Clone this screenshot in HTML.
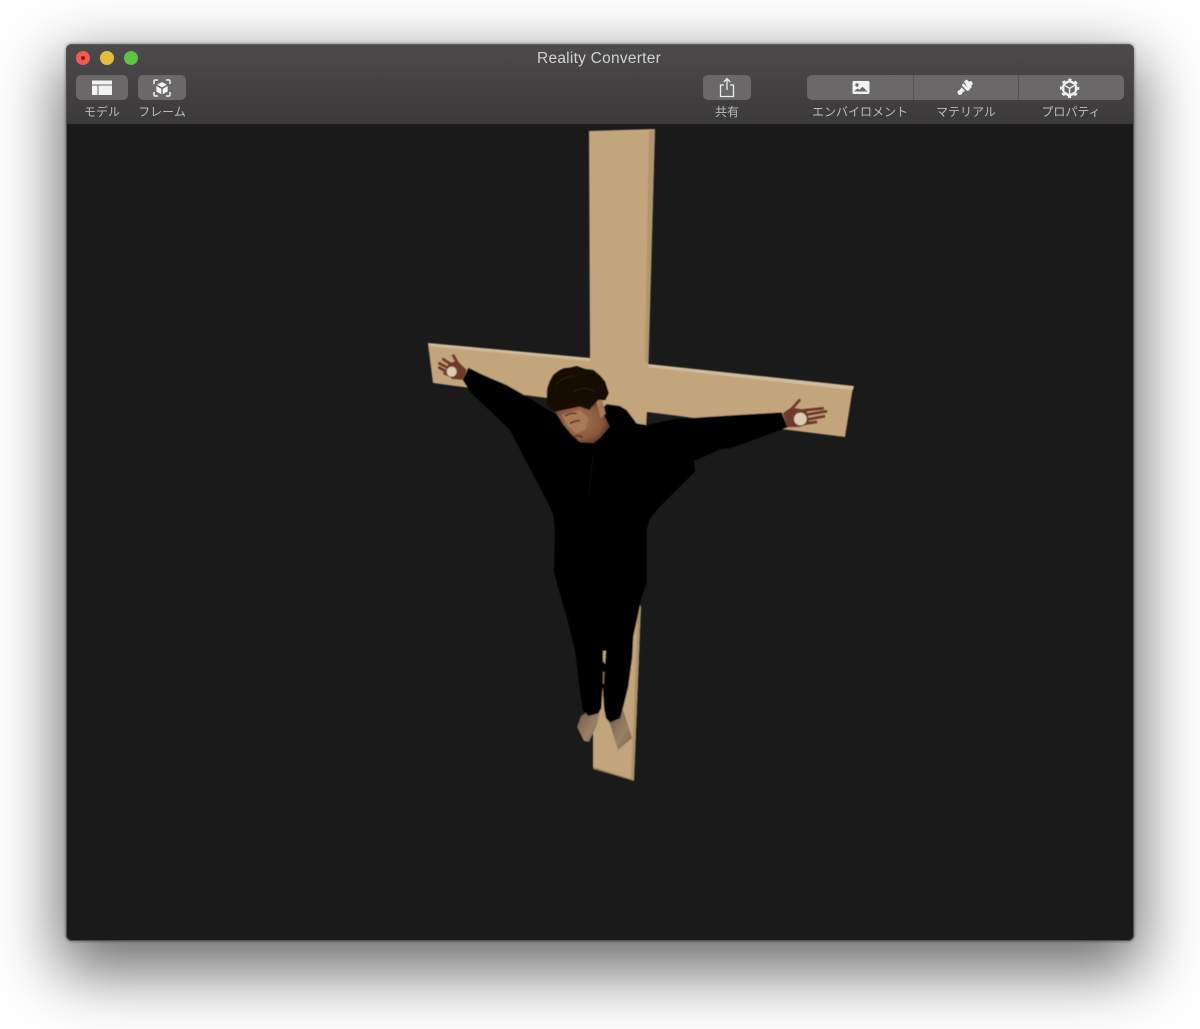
<!DOCTYPE html>
<html lang="ja">
<head>
<meta charset="utf-8">
<title>Reality Converter</title>
<style>
html,body{margin:0;padding:0;width:1200px;height:1029px;background:#fff;overflow:hidden}
#win{position:absolute;left:66px;top:44px;width:1068px;height:897px;border-radius:6px;background:#1a1a1a;box-shadow:0 24px 62px 8px rgba(0,0,0,.56),0 0 3px rgba(0,0,0,.5)}
#bar{position:absolute;left:66px;top:44px;width:1068px;height:80px;border-radius:6px 6px 0 0;background:linear-gradient(#4c4a4b,#3b393a)}
#edge{position:absolute;left:66px;top:44px;width:1068px;height:897px;border-radius:6px;box-sizing:border-box;border:1px solid #515151;border-top-color:#5a5a5a;pointer-events:none}
.t{position:absolute;font-family:"Liberation Sans","Noto Sans CJK JP",sans-serif;white-space:nowrap;transform:translateX(-50%)}
#title{left:599px;top:50px;font-size:15.5px;line-height:18px;color:#d2d2d2;letter-spacing:.25px}
.l{top:104px;font-size:12px;line-height:17px;color:#bcbcbc}
.b{position:absolute;top:75px;height:25px;background:#6a6869;border-radius:5px}
.d{position:absolute;top:75px;width:1px;height:25px;background:#565455}
.dot{position:absolute;top:51px;width:14px;height:14px;border-radius:50%}
svg{position:absolute;left:0;top:0}
</style>
</head>
<body>
<div id="win"></div>
<svg width="1200" height="1029" viewBox="0 0 1200 1029">
<defs>
<filter id="s" x="-5%" y="-5%" width="110%" height="110%"><feGaussianBlur stdDeviation=".5"/></filter>
<filter id="f" x="-20%" y="-20%" width="140%" height="140%"><feGaussianBlur stdDeviation="1.500"/></filter>
<linearGradient id="ft" x1="0" y1="0" x2="1" y2="1"><stop offset="0" stop-color="#6f5a44"/><stop offset=".6" stop-color="#998068"/><stop offset="1" stop-color="#7a644c"/></linearGradient>
<radialGradient id="sk" cx=".45" cy=".5" r=".6"><stop offset="0" stop-color="#a87553"/><stop offset=".7" stop-color="#85563b"/><stop offset="1" stop-color="#4a2c1c"/></radialGradient>
</defs>
<g filter="url(#s)">
<!-- cross -->
<polygon points="589,131 655,129 648,365 853,387 845,437 647,412 646,430 590,430 547,398 433,383 428,344 590,359" fill="#c3a57b"/>
<polygon points="649,131 655,129 648.500,365 645,362" fill="#b0966f"/>
<polygon points="428,343 590,358 590,361 429,346" fill="#cfbd9c"/>
<polygon points="648,364 854,386 853,390 648,367" fill="#cfbd9c"/>
<polygon points="593,700 630,600 641,606 634,781 593,768" fill="#c3a57b"/>
<polygon points="638,606 641,606 634,781 631,779" fill="#ab9069"/>
<polygon points="593,767 631,779 634,781 593,769" fill="#8f7a5c"/>
<!-- body -->
<g transform="translate(420 330) scale(.33333)">
<polygon fill="#030202" points="145,113 190,135 260,165 330,205 385,240 480,300 560,222 600,228 620,240 650,280 680,285 760,268 830,263 950,255 1085,247 1103,292 1000,330 930,355 900,358 840,385 822,392 825,425 770,480 720,530 690,565 680,600 680,610 405,610 400,550 275,310 270,300 150,185 128,150"/>
<path d="M520,370 L510,460 L497,600" stroke="#120b07" stroke-width="3" fill="none"/>
<path d="M575,490 l45,-8 l0,25 l-30,12z" stroke="#0e0805" stroke-width="2" fill="none"/>
<!-- left hand -->
<g fill="none" stroke="#70392a" stroke-width="9" stroke-linecap="round">
<path d="M100,77 L116,105M70,88 L98,106M58,100 L88,116M58,113 L85,128M74,130 L95,138"/>
</g>
<polygon fill="#70392a" points="85,100 112,92 140,120 128,150 95,147 78,122"/>
<circle cx="95" cy="125" r="15" fill="#dacdb4"/>
<!-- right hand -->
<g fill="none" stroke="#70392a" stroke-width="9" stroke-linecap="round">
<path d="M1138,211 L1112,240M1150,241 L1208,235M1155,255 L1218,244M1155,270 L1212,259M1150,282 L1188,276"/>
</g>
<polygon fill="#70392a" points="1088,250 1113,232 1160,240 1168,280 1140,291 1103,292"/>
<circle cx="1141" cy="267" r="19" fill="#dacdb4"/>
</g>
<!-- feet (behind legs) -->
<polygon points="577,727 581,716 590,710 600,710 597,725 589,742 584,741" fill="url(#ft)"/>
<polygon points="608,718 623,710 628,725 632,738 618,750" fill="url(#ft)"/>
<g transform="translate(530 500) scale(.33333)">
<polygon fill="#030202" points="50,-5 75,60 72,215 85,265 110,350 135,450 148,560 158,630 175,648 205,640 214,625 218,560 222,625 228,655 240,668 270,655 280,620 295,560 307,470 310,410 325,340 335,290 350,250 350,65 405,-5"/>
</g>
<polygon points="603,651 606,651 605,664 603,661" fill="#c3a57b"/>
<polygon points="603,672 604.500,672 604,684 603,684" fill="#8a6f4e"/>
</g>
<!-- head -->
<g transform="translate(530 355) scale(.33333)" filter="url(#f)">
<polygon fill="url(#sk)" points="75,170 100,165 150,155 200,135 220,150 225,185 240,215 210,250 190,265 150,262 125,240 100,210"/>
<polygon fill="#a97a58" points="95,180 150,165 175,190 165,225 140,235 115,215"/>
<path d="M105,183 q18,-10 35,-8" stroke="#4a2e1e" stroke-width="4" fill="none"/>
<path d="M120,205 q14,-8 30,-8" stroke="#4a2e1e" stroke-width="5" fill="none"/>
<path d="M135,245 q12,-6 22,2" stroke="#5a3424" stroke-width="5" fill="none"/>
<polygon fill="#a67757" points="198,140 215,130 228,175 212,190"/>
<polygon fill="#130a05" points="52,100 60,78 70,60 85,48 100,40 120,38 140,33 165,42 190,45 210,62 225,80 236,115 226,135 205,135 195,145 178,165 150,155 100,165 75,170 50,150"/>
<path d="M75,90 q30,-30 60,-25M130,110 q35,-20 65,0" stroke="#23140a" stroke-width="6" fill="none"/>
</g>
</svg>
<div id="bar"></div>
<div id="edge"></div>
<div class="dot" style="left:76px;background:#f25a52"></div>
<div class="dot" style="left:100px;background:#e5bd3e"></div>
<div class="dot" style="left:123.500px;background:#62c246"></div>
<div style="position:absolute;left:81px;top:56px;width:4px;height:4px;border-radius:50%;background:#8c1a12"></div>
<div class="t" id="title">Reality Converter</div>
<div class="b" style="left:76px;width:52px"></div>
<div class="b" style="left:138px;width:48px"></div>
<div class="b" style="left:703px;width:48px"></div>
<div class="b" style="left:807px;width:317px"></div>
<div class="d" style="left:913px"></div>
<div class="d" style="left:1018px"></div>
<svg width="1200" height="1029" viewBox="0 0 1200 1029">
<!-- model -->
<rect x="92" y="80.500" width="20" height="4" fill="#f2f2f2"/>
<rect x="92" y="85.500" width="5.500" height="9.500" fill="#f2f2f2"/>
<rect x="98.500" y="85.500" width="13.500" height="9.500" fill="#f2f2f2"/>
<!-- frame -->
<g fill="none" stroke="#f2f2f2" stroke-width="1.500">
<path d="M154,84v-3q0-1 1-1h3M166,80h3q1,0 1,1v3M170,92v3q0,1-1,1h-3M158,96h-3q-1,0-1-1v-3"/>
</g>
<path fill="#f2f2f2" d="M162,82l5,2.700-5,2.700-5-2.700z M156.300,86l5,2.800v5.500l-5-2.800z M167.700,86v5.500l-5,2.800v-5.500z"/>
<!-- share -->
<g fill="none" stroke="#eeeeee" stroke-width="1.300">
<path d="M724,85h-3.500v11.500h13v-11.500h-3.500"/>
<path d="M727,90v-11M723.800,82l3.200-3.300 3.200,3.300"/>
</g>
<!-- environment -->
<rect x="852.500" y="81" width="17" height="13" rx="1.500" fill="#f2f2f2"/>
<circle cx="857" cy="85" r="1.700" fill="#6a6869"/>
<path fill="#6a6869" d="M854,91.500l3.500-3 2,1.200 3,-3 5,4.800z"/>
<!-- brush -->
<path fill="#f2f2f2" d="M964,81.500l2.800-2 2,2.200 2.500-.8 1.700,3.200-1.500,1 .1,2.200-2.800,2.700z"/>
<path fill="#f2f2f2" d="M963,83l7,7-2.800,1-5.300-5.300z"/>
<path fill="#f2f2f2" d="M961.500,87.500l3.500,3.300-2.500,1.700q-.3,2.300-2.700,2.500-2.300-.2-2.300-2.700 .2-2 2.200-2.200z"/>
<!-- properties -->
<circle cx="1069.600" cy="88.300" r="7.800" fill="#f2f2f2"/>
<circle cx="1069.600" cy="88.300" r="8.700" fill="none" stroke="#f2f2f2" stroke-width="2" stroke-dasharray="3.300 3.530" stroke-dashoffset="1.600"/>
<path fill="#6a6869" d="M1069.600,82.300l5.200,3v6l-5.200,3-5.200-3v-6z"/>
<path fill="none" stroke="#f2f2f2" stroke-width="1.400" d="M1064.400,85.300l5.200,3 5.200-3M1069.600,88.300v6"/>
</svg>
<div class="t l" style="left:102px">モデル</div>
<div class="t l" style="left:162px">フレーム</div>
<div class="t l" style="left:727px">共有</div>
<div class="t l" style="left:860px">エンバイロメント</div>
<div class="t l" style="left:966px">マテリアル</div>
<div class="t l" style="left:1071px">プロパティ</div>
</body>
</html>
